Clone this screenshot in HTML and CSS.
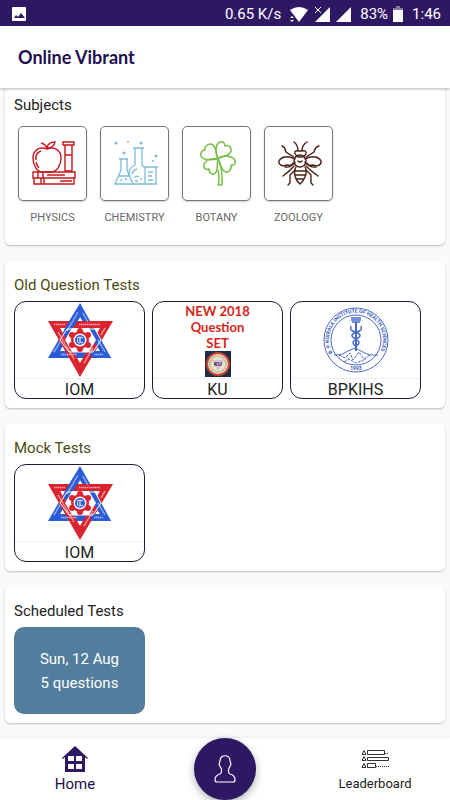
FILE: index.html
```
<!DOCTYPE html>
<html lang="en">
<head>
  <meta charset="UTF-8">
  <meta name="viewport" content="width=device-width, initial-scale=1.0">
  <title>Online Vibrant</title>
  <link rel="stylesheet" href="styles.css">
</head>
<body>
  <!-- shared emblem, used by both IOM cards -->
  <svg class="sprite" width="0" height="0" aria-hidden="true">
    <symbol id="iom" viewBox="0 0 66 76">
      <path d="M33 1L1 56H64ZM33 15L13 49H53Z" fill="#2b5bd7" fill-rule="evenodd"/>
      <path d="M1 19H66L33 75ZM13 26L33 61L53 26Z" fill="#d9232e" fill-rule="evenodd"/>
      <path d="M24 16L17 28L21 34L33 15L29 8ZM44 49V56H64L49 29L45 36L53 49Z" fill="#2b5bd7"/>
      <path d="M20 27H48L54 38L46 50H22L13 38Z" fill="none" stroke="#fff" stroke-width="1"/>
      <path d="M25 26H42L49 38L42 50H25L18 38Z" fill="#fff"/>
      <g fill="#d9232e">
        <circle cx="33" cy="38" r="9"/>
        <circle cx="33" cy="29" r="3"/>
        <circle cx="41" cy="33" r="3"/>
        <circle cx="41" cy="43" r="3"/>
        <circle cx="33" cy="47" r="3"/>
        <circle cx="25" cy="43" r="3"/>
        <circle cx="25" cy="33" r="3"/>
      </g>
      <circle cx="33" cy="38" r="6.5" fill="#fff"/>
      <circle cx="33" cy="38" r="5" fill="#2b5bd7"/>
      <path d="M30 36Q33 34 36 36M33 36V40Q34 42 36 40M31 37Q29 41 33 41" fill="none" stroke="#fff" stroke-width="1"/>
      <g fill="none" stroke="#fff" stroke-width="1.5" stroke-dasharray="1.5 .5" opacity=".6">
        <path d="M7 22.5H18M32 22.5H53"/>
        <path d="M7 50L13 40M20 29L31 10M36 11L41 20M51 38L58 50"/>
        <path d="M11 30L27 57M58 26L54 33M46 46L37 61"/>
        <path d="M14 52.5H30M47 52.5H56"/>
      </g>
    </symbol>
  </svg>

  <div class="app">
    <div class="status-bar">
      <svg class="status-picture" width="16" height="16" viewBox="0 0 16 16">
        <rect x="1" y="1" width="14" height="14" rx="1" fill="#fff"/>
        <path d="M3 12L5 9L7 11L10 7L14 12Z" fill="#2f1863"/>
      </svg>
      <span class="speed">0.65 K/s</span>
      <svg width="20" height="16" viewBox="0 0 20 16">
        <path d="M1 4Q10 -2 19 4L10 16Z" fill="#fff"/>
        <path d="M0 9H5L7 16H0Z" fill="#2f1863"/>
        <path d="M1 12L3 10L5 12ZM1 14L3 16L5 14Z" fill="#fff"/>
      </svg>
      <svg class="signal" width="16" height="16" viewBox="0 0 16 16">
        <path d="M16 1V16H1Z" fill="#fff"/>
        <path d="M0 0H8V8H0Z" fill="#2f1863"/>
        <path d="M1 1L7 7M7 1L1 7" stroke="#fff" stroke-width="1"/>
      </svg>
      <svg class="signal" width="16" height="16" viewBox="0 0 16 16">
        <path d="M16 1V16H1Z" fill="#fff"/>
      </svg>
      <span class="battery-level">83%</span>
      <svg class="battery" width="12" height="16" viewBox="0 0 12 16">
        <path d="M1 4V2H4V0H8V2H11V4Z" fill="#82749f"/>
        <path d="M1 4H11V16H1Z" fill="#fff"/>
      </svg>
      <span class="clock">1:46</span>
    </div>

    <header class="app-bar">
      <h1>Online Vibrant</h1>
    </header>

    <main class="content">
      <section class="card card-subjects">
        <h2>Subjects</h2>
        <div class="subjects">
          <a href="#physics" class="subject">
            <span class="subject-icon">
              <svg width="45" height="45" viewBox="0 0 45 45" fill="none" stroke="#c4161c" stroke-width="1.4">
                <path d="M15 8C8 5 1 9 1 17C1 24 5 31 10 31H19C25 31 29 24 29 17C29 9 22 5 15 8Z"/>
                <path d="M15 8Q14 3 9 2M15 7Q16 1 23 1Q22 7 15 7M4 19Q3 12 9 10M4 21Q5 25 7 27"/>
                <path d="M31 1H42V4H31ZM33 4V30H40V4M33 14H40"/>
                <path d="M1 31H43V37H1ZM2 37H42V43H2ZM6 31V37M11 31V37M9 37V43M12 37V43M15 34H33M28 40H40"/>
              </svg>
            </span>
            <span class="subject-name">PHYSICS</span>
          </a>
          <a href="#chemistry" class="subject">
            <span class="subject-icon">
              <svg width="45" height="45" viewBox="0 0 45 45" fill="none" stroke="#7fbbdc" stroke-width="1.3">
                <path d="M5 18H14M7 18V29L1 43H19L13 29V18M5 35H15"/>
                <path d="M19 7H30M21 7V24Q13 28 16 35M28 7V24L31 27M18 43H43M30 26H44M31 26V43M42 26V43"/>
                <path d="M18 33Q19 29 23 28M34 31H39M34 35H38M34 39H39M20 37Q22 34 25 36M21 40H24"/>
                <g fill="#7fbbdc" stroke="none">
                  <circle cx="2" cy="2" r="1.5"/>
                  <circle cx="14" cy="1" r="1"/>
                  <circle cx="27" cy="2" r="1.5"/>
                  <circle cx="10" cy="12" r="1.5"/>
                  <circle cx="42" cy="15" r="1.5"/>
                  <circle cx="39" cy="20" r="1"/>
                  <circle cx="7" cy="39" r="1"/>
                  <circle cx="12" cy="38" r="1"/>
                  <circle cx="27" cy="38" r="1"/>
                </g>
              </svg>
            </span>
            <span class="subject-name">CHEMISTRY</span>
          </a>
          <a href="#botany" class="subject">
            <span class="subject-icon">
              <svg width="45" height="45" viewBox="0 0 45 45" fill="none" stroke="#76bd45" stroke-width="1.5" stroke-linejoin="round">
                <path d="M22 18C16 19 7 20 5 15C4 12 6 9 9 9C8 4 15 1 18 5C21 9 20 14 22 18Z"/>
                <path d="M22 18C19 12 19 3 24 1C27 0 29 2 29 5C33 3 37 8 34 12C31 16 26 15 22 18Z"/>
                <path d="M22 18C25 14 34 14 38 18C41 22 38 25 35 24C36 29 32 33 28 30C24 27 25 22 22 18Z"/>
                <path d="M22 18C17 17 9 18 8 24C7 28 11 29 13 28C13 33 18 35 20 31C23 27 20 22 22 18Z"/>
                <path d="M23 20Q27 31 26 44H22Q24 38 22 29"/>
              </svg>
            </span>
            <span class="subject-name">BOTANY</span>
          </a>
          <a href="#zoology" class="subject">
            <span class="subject-icon">
              <svg width="45" height="45" viewBox="0 0 45 45" fill="none" stroke="#4a2114" stroke-width="1.4" stroke-linecap="round">
                <path d="M16 1Q20 4 20 10M29 1Q24 4 24 10M17 13Q16 9 20 10H24Q29 9 28 13L25 16H20Z"/>
                <circle cx="22" cy="20" r="6"/>
                <path d="M20 20Q22 22 24 20M17 18C9 14 3 16 1 20C0 24 5 26 9 24C13 25 17 23 17 21"/>
                <path d="M27 18C35 14 41 16 43 20C44 24 39 26 35 24C31 25 27 23 27 21"/>
                <path d="M4 5Q7 6 8 11L16 16M41 5Q37 6 36 11L28 16M16 25Q12 30 5 35M28 25Q33 30 40 35M17 29L12 34V42L10 44M28 29L33 34V42L35 44"/>
                <path d="M18 26C15 31 17 39 22 43C27 39 30 31 27 26M17 30H27M17 34H27M19 38H26M7 26Q13 27 15 22M38 26Q32 27 29 22"/>
              </svg>
            </span>
            <span class="subject-name">ZOOLOGY</span>
          </a>
        </div>
      </section>

      <section class="card">
        <h2 class="olive">Old Question Tests</h2>
        <div class="tests">
          <a href="#iom" class="test">
            <span class="test-image"><svg width="66" height="76"><use href="#iom"/></svg></span>
            <span class="test-name">IOM</span>
          </a>
          <a href="#ku" class="test">
            <span class="test-image ku-image">
              <span class="ku-text">NEW 2018<br>Question<br>SET</span>
              <svg width="26" height="26" viewBox="0 0 26 26">
                <rect width="26" height="26" fill="#1c2947"/>
                <circle cx="13" cy="13" r="12" fill="#c9412f"/>
                <circle cx="13" cy="13" r="10" fill="#ece2c8"/>
                <circle cx="13" cy="13" r="8" fill="none" stroke="#a9a184" stroke-width="2" stroke-dasharray="1 1"/>
                <path d="M7 9H19L13 20Z" fill="#d7bfd7"/>
                <text x="13" y="15" class="ku-mark">KU</text>
              </svg>
            </span>
            <span class="test-name">KU</span>
          </a>
          <a href="#bpkihs" class="test">
            <span class="test-image">
              <svg width="68" height="68" viewBox="0 0 68 68" fill="none" stroke="#4a6ac8">
                <circle cx="34" cy="34" r="32"/>
                <circle cx="34" cy="34" r="25"/>
                <path id="seal-arc" d="M10.5 47A27 27 0 1 1 57.5 47" stroke="none"/>
                <text class="seal-text"><textPath href="#seal-arc">B. P. KOIRALA INSTITUTE OF HEALTH SCIENCES</textPath></text>
                <path d="M12 49Q20 50 26 45L33 42L41 46Q47 50 56 49"/>
                <path d="M17 49L23 52L28 47L31 54L37 46L42 53L48 49M22 56L27 53L34 57L44 53" stroke-dasharray="3 1"/>
                <path d="M29 12H39M29 14H39M30 16H38" stroke-width="1.5"/>
                <path d="M34 16V45" stroke-width="2"/>
                <path d="M29 20Q27 25 34 26Q41 25 39 20M34 26Q26 30 34 33Q42 30 34 26M34 33Q28 37 34 40Q40 37 34 33" stroke-width="1.5"/>
                <text x="34" y="64" class="seal-year">1993</text>
              </svg>
            </span>
            <span class="test-name">BPKIHS</span>
          </a>
        </div>
      </section>

      <section class="card">
        <h2 class="olive">Mock Tests</h2>
        <div class="tests">
          <a href="#mock-iom" class="test">
            <span class="test-image"><svg width="66" height="76"><use href="#iom"/></svg></span>
            <span class="test-name">IOM</span>
          </a>
        </div>
      </section>

      <section class="card">
        <h2>Scheduled Tests</h2>
        <a href="#scheduled" class="scheduled">
          <span>Sun, 12 Aug</span>
          <span>5 questions</span>
        </a>
      </section>
    </main>

    <nav class="bottom-nav">
      <a href="#home" class="nav-item active">
        <svg width="26" height="26" viewBox="0 0 26 26">
          <path d="M13 0L26 12L25 13L23 11V26H3V11L1 13L0 12Z" fill="#2f1863"/>
          <path d="M6 10H12V15H6ZM14 10H20V15H14ZM6 18H12V23H6ZM14 18H20V23H14Z" fill="#fff"/>
        </svg>
        Home
      </a>
      <button class="profile-button" aria-label="Profile">
        <svg width="22" height="28" viewBox="0 0 22 28" fill="none" stroke="#fff" stroke-width="1.2">
          <path d="M6 6C6 -1 16 -1 16 6C17 8 17 11 15 13C14 16 14 18 16 19C20 20 21 22 21 25Q21 27 19 27H3Q1 27 1 25C1 22 2 20 6 19C8 18 8 16 7 13C5 11 5 8 6 6Z"/>
        </svg>
      </button>
      <a href="#leaderboard" class="nav-item">
        <svg width="28" height="20" viewBox="0 0 28 20" fill="none" stroke="#333">
          <path d="M6.5 1.5H23.5V5.5H6.5ZM6.5 8.5H27.5V11.5H6.5ZM6.5 14.5H14.5V18.5H6.5Z"/>
          <path d="M24 4.5H28M15 17.5H28" stroke-dasharray="1 1"/>
          <path d="M1 5.5H5L3 1.5ZM1 11.5H5L3 7.5ZM1 18.5H5L3 14.5Z"/>
        </svg>
        <span>Leaderboard</span>
      </a>
    </nav>
  </div>
</body>
</html>
```
FILE: styles.css
```
:root {
  --primary: #2f1863;
  --primary-dark: #20104f;
  --bg: #fafafa;
  --olive: #4a4a12;
  --scheduled: #527d9d;
}

* {
  margin: 0;
  padding: 0;
  box-sizing: border-box;
}

body {
  background: var(--bg);
  color: #222;
  font-family: Roboto, "Liberation Sans", sans-serif;
}

a {
  color: inherit;
  text-decoration: none;
}

svg {
  display: block;
  flex-shrink: 0;
}

.sprite {
  position: absolute;
}

.app {
  min-height: 100vh;
  display: flex;
  flex-direction: column;
}

.status-bar {
  height: 26px;
  padding: 2px 9px 0 11px;
  display: flex;
  align-items: center;
  background: var(--primary);
  color: #fff;
  font-size: 15px;
}

.speed {
  margin: 0 8px 0 auto;
}

.signal {
  margin-left: 5px;
}

.battery-level {
  margin-left: 9px;
}

.battery {
  margin: 0 8px 0 4px;
}

.app-bar {
  height: 62px;
  padding: 0 18px;
  display: flex;
  align-items: center;
  background: #fff;
  box-shadow: 0 1px 3px rgba(0, 0, 0, 0.3);
  z-index: 1;
}

.app-bar h1 {
  color: var(--primary-dark);
  font-family: Lato, "Open Sans", sans-serif;
  font-size: 18px;
  font-weight: 700;
}

.content {
  flex: 1;
  padding: 0 5px 15px;
  display: flex;
  flex-direction: column;
  gap: 16px;
}

.card {
  padding: 14px 9px 9px;
  background: #fff;
  border-radius: 5px;
  box-shadow: 0 1px 2px rgba(0, 0, 0, 0.25);
}

.card h2 {
  margin-bottom: 6px;
  font-size: 15px;
  font-weight: 400;
  line-height: 20px;
}

.card h2.olive {
  color: var(--olive);
}

.card-subjects {
  padding: 7px 9px 18px;
  border-radius: 0 0 5px 5px;
}

.card-subjects h2 {
  margin-bottom: 11px;
}

.subjects {
  padding-left: 4px;
  display: flex;
  gap: 13px;
}

.subject {
  width: 69px;
  display: flex;
  flex-direction: column;
  align-items: center;
  gap: 8px;
}

.subject-icon {
  width: 100%;
  height: 75px;
  padding-left: 3px;
  display: flex;
  align-items: center;
  justify-content: center;
  border: 1px solid #77777c;
  border-radius: 5px;
  box-shadow: 0 1px 2px rgba(0, 0, 0, 0.2);
}

.subject-name {
  color: #666;
  font-size: 11px;
  line-height: 18px;
}

.tests {
  display: flex;
  gap: 7px;
}

.test {
  width: 131px;
  height: 98px;
  display: flex;
  flex-direction: column;
  border: 1px solid #20183f;
  border-radius: 12px;
}

.test-image {
  height: 76px;
  display: flex;
  flex-shrink: 0;
  align-items: center;
  justify-content: center;
}

.ku-image {
  flex-direction: column;
}

.ku-text {
  color: #d52518;
  font-family: Lato, sans-serif;
  font-size: 13px;
  font-weight: 700;
  line-height: 16px;
  text-align: center;
}

.ku-mark {
  fill: #30204a;
  font-size: 6px;
  font-weight: 700;
  text-anchor: middle;
}

.seal-text,
.seal-year {
  fill: #3455b5;
  stroke: none;
  font-size: 5px;
  font-weight: 700;
}

.seal-year {
  text-anchor: middle;
}

.test-name {
  flex: 1;
  border-top: 1px solid #eee;
  font-size: 16px;
  line-height: 22px;
  text-align: center;
}

.scheduled {
  width: 131px;
  height: 87px;
  display: flex;
  flex-direction: column;
  align-items: center;
  justify-content: center;
  background: var(--scheduled);
  border-radius: 10px;
  color: #fff;
  font-size: 15px;
  line-height: 24px;
}

.bottom-nav {
  height: 62px;
  display: grid;
  grid-template-columns: 1fr 1fr 1fr;
  justify-items: center;
  background: #fff;
  box-shadow: 0 -1px 2px rgba(0, 0, 0, 0.06);
}

.nav-item {
  padding-top: 8px;
  display: flex;
  flex-direction: column;
  align-items: center;
  gap: 2px;
  font-size: 13px;
  line-height: 20px;
}

.nav-item svg {
  height: 26px;
}

.nav-item.active {
  color: var(--primary-dark);
  font-size: 15px;
}

.profile-button {
  width: 62px;
  height: 62px;
  display: flex;
  align-items: center;
  justify-content: center;
  border: none;
  border-radius: 50%;
  background: var(--primary);
  box-shadow: 0 3px 8px rgba(0, 0, 0, 0.3);
  cursor: pointer;
}
```
